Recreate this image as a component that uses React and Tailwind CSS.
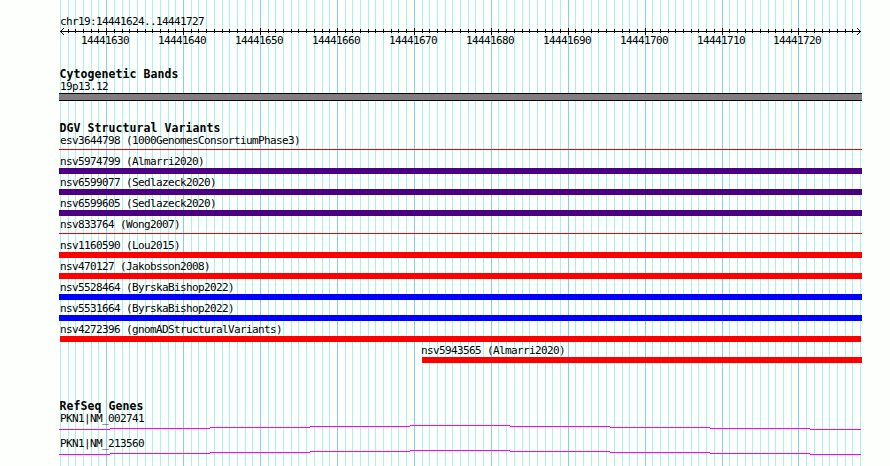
import React from 'react'

const START = 14441624;
const LEFT = 60;
const BASES = 104;
const WIDTH = 800;

// x of every base position on the panel
const positions = Array.from({ length: BASES + 1 }, (_, i) => ({
  x: Math.round(LEFT + (i * WIDTH) / BASES),
  coord: START + i,
  major: (START + i) % 10 === 0,
}));

const variants = [
  { name: 'esv3644798 (1000GenomesConsortiumPhase3)', bar: 'mt-0.5 h-px w-[803px] bg-[#f00000]' },
  { name: 'nsv5974799 (Almarri2020)', bar: 'h-1.5 w-[803px] bg-[#4b0082]' },
  { name: 'nsv6599077 (Sedlazeck2020)', bar: 'h-1.5 w-[803px] bg-[#4b0082]' },
  { name: 'nsv6599605 (Sedlazeck2020)', bar: 'h-1.5 w-[803px] bg-[#4b0082]' },
  { name: 'nsv833764 (Wong2007)', bar: 'mt-0.5 h-px w-[803px] bg-[#f00000]' },
  { name: 'nsv1160590 (Lou2015)', bar: 'h-1.5 w-[803px] bg-[#ff0000]' },
  { name: 'nsv470127 (Jakobsson2008)', bar: 'h-1.5 w-[803px] bg-[#ff0000]' },
  { name: 'nsv5528464 (ByrskaBishop2022)', bar: 'h-1.5 w-[803px] bg-[#0000ff]' },
  { name: 'nsv5531664 (ByrskaBishop2022)', bar: 'h-1.5 w-[803px] bg-[#0000ff]' },
  { name: 'nsv4272396 (gnomADStructuralVariants)', bar: 'ml-px h-1.5 w-[801px] bg-[#ff0000]' },
  { name: 'nsv5943565 (Almarri2020)', row: 'pl-[361px]', bar: 'ml-0.5 h-1.5 w-[440px] bg-[#ff0000]' },
];

const genes = ['PKN1|NM_002741', 'PKN1|NM_213560'];

// intron line, one pixel higher every 100px up to the middle
const intron = [
  [0, 51, 4],
  [51, 151, 3],
  [151, 251, 2],
  [251, 351, 1],
  [351, 451, 0],
  [451, 551, 1],
  [551, 651, 2],
  [651, 751, 3],
  [751, 802, 4],
];

const Grid = () => (
  <svg className="absolute inset-0" width="890" height="466" shapeRendering="crispEdges">
    {positions.map(p => (
      <rect key={p.coord} x={p.x} y="0" width="1" height="466" fill={p.major ? '#87ceeb' : '#afeeee'} />
    ))}
  </svg>
);

const Ruler = () => (
  <svg className="block" width="803" height="7" viewBox="59 28 803 7" shapeRendering="crispEdges">
    <rect x="60" y="31" width="801" height="1" />
    {positions.slice(1, -1).map(p => (
      <rect key={p.coord} x={p.x} y={p.major ? 28 : 29} width="1" height={p.major ? 7 : 4} />
    ))}
    {[1, 2, 3].map(d => (
      <g key={d}>
        <rect x={60 + d} y={31 - d} width="1" height="1" />
        <rect x={60 + d} y={31 + d} width="1" height="1" />
        <rect x={860 - d} y={31 - d} width="1" height="1" />
        <rect x={860 - d} y={31 + d} width="1" height="1" />
      </g>
    ))}
  </svg>
);

const Label = ({ children }) => (
  <p className="h-[13px] pl-px whitespace-pre">{children}</p>
);

const Title = ({ children }) => (
  <h2 className="h-3 whitespace-pre pl-[0.5px] text-[11.5px] leading-[13px] font-bold tracking-[0.077px]">{children}</h2>
);

export default function App() {
  return (
    <div className="relative h-[466px] w-[890px] overflow-hidden bg-[#fcfffc]">
      <Grid />
      <main className="relative pt-[15px] pl-[59px] font-['DejaVu_Sans_Mono',monospace] text-[11px] leading-[13px] tracking-[-0.622px] text-black">
        <section className="h-[53px]">
          <Label>chr19:14441624..14441727</Label>
          <Ruler />
          <div className="relative -mt-px h-[13px]">
            {positions.filter(p => p.major).map(p => (
              <span key={p.coord} className="absolute top-0 w-12" style={{ left: p.x - 59 - 25 }}>
                {p.coord}
              </span>
            ))}
          </div>
        </section>

        <section className="h-[54px]">
          <Title>Cytogenetic Bands</Title>
          <Label>19p13.12</Label>
          <div className="h-2 w-[803px] border-y border-black bg-[#827d80]" />
        </section>

        <section className="h-[278px]">
          <Title>DGV Structural Variants</Title>
          {variants.map(v => (
            <div key={v.name} className={`h-[21px] ${v.row || ''}`}>
              <Label>{v.name}</Label>
              <div className={v.bar} />
            </div>
          ))}
        </section>

        <section>
          <Title>RefSeq Genes</Title>
          {genes.map(name => (
            <div key={name} className="h-[25px]">
              <Label>{name}</Label>
              <svg className="block" width="803" height="5" shapeRendering="crispEdges">
                {intron.map(([x1, x2, y]) => (
                  <rect key={x1} x={x1} y={y} width={x2 - x1} height="1" fill="#ff00ff" />
                ))}
              </svg>
            </div>
          ))}
        </section>
      </main>
    </div>
  );
}
